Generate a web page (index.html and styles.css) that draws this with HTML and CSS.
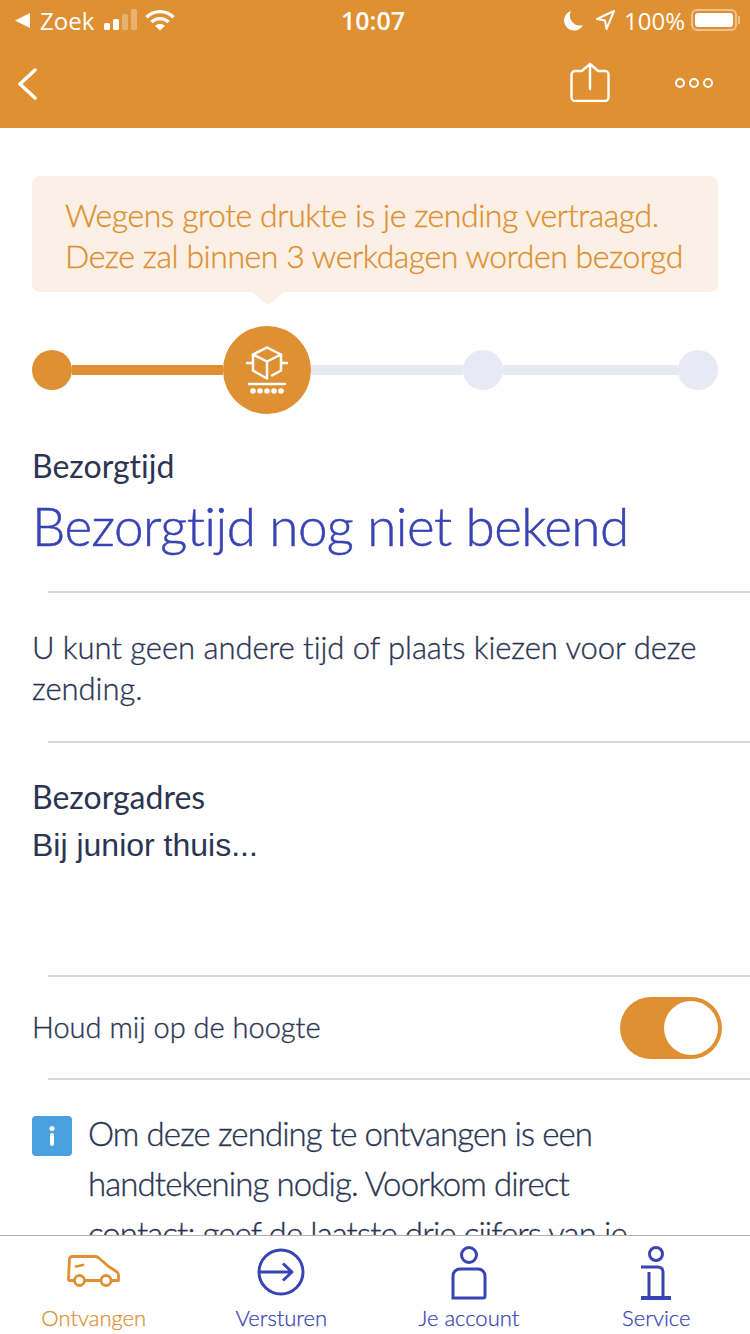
FILE: index.html
```html
<!DOCTYPE html>
<html lang="nl">

<head>
    <meta charset="UTF-8">
    <meta name="viewport" content="width=device-width, initial-scale=1.0">
    <title>Zending</title>
    <link rel="stylesheet" href="styles.css">
</head>

<body>
    <div class="page">
        <header class="top">
            <div class="status">
                <div class="status-left">
                    <svg class="ic-back-small" width="16" height="15" viewBox="0 0 16 15"><path d="M15 0v15L0 7.500z" fill="#fff"/></svg>
                    <span class="carrier">Zoek</span>
                    <svg class="ic-signal" width="34" height="22" viewBox="0 0 34 22">
                        <rect x="0" y="14" width="6" height="7" rx="1.500" fill="#fff"/>
                        <rect x="9" y="10" width="6" height="11" rx="1.500" fill="#fff"/>
                        <rect x="18" y="5" width="6" height="16" rx="1.500" fill="#fff" opacity=".3"/>
                        <rect x="27" y="0" width="6" height="21" rx="1.500" fill="#fff" opacity=".3"/>
                    </svg>
                    <svg class="ic-wifi" width="30" height="22" viewBox="0 0 30 22" fill="none" stroke="#fff" stroke-width="3.400">
                        <path d="M1.500 8.200C9 .8 21 .8 28.500 8.200"/>
                        <path d="M6.500 13C11.500 8.500 18.500 8.500 23.500 13"/>
                        <path d="M15 21.500l-5-4.800c3-2.400 7-2.400 10 0z" fill="#fff" stroke="none"/>
                    </svg>
                </div>
                <span class="clock">10:07</span>
                <div class="status-right">
                    <svg width="20" height="21" viewBox="0 0 20 21"><path d="M7 1a10 10 0 0 0 12 14A10 10 0 1 1 7 1z" fill="#fff"/></svg>
                    <svg class="ic-location" width="19" height="20" viewBox="0 0 19 20" fill="none" stroke="#fff" stroke-width="2" stroke-linejoin="round"><path d="M18 1L1 9l8 1.500L10.500 19z"/></svg>
                    <span class="battery-text">100%</span>
                    <div class="battery"><div class="battery-fill"></div></div>
                    <div class="battery-tip"></div>
                </div>
            </div>
            <nav class="navbar">
                <svg class="nav-back" width="20" height="32" viewBox="0 0 20 32" fill="none" stroke="#fff" stroke-width="3.400" stroke-linecap="round" stroke-linejoin="round"><path d="M18 2L3 16l15 14"/></svg>
                <div class="nav-actions">
                    <svg class="ic-share" width="40" height="40" viewBox="0 0 40 40" fill="none" stroke="#fff" stroke-width="2.400" stroke-linecap="round" stroke-linejoin="round">
                        <path d="M12 9H5a3.500 3.500 0 0 0-3.500 3.500v23A3.500 3.500 0 0 0 5 39h30a3.500 3.500 0 0 0 3.500-3.500v-23A3.500 3.500 0 0 0 35 9h-7"/>
                        <path d="M20 27V2M13 8l7-6 7 6"/>
                    </svg>
                    <svg class="ic-more" width="38" height="10" viewBox="0 0 38 10" fill="none" stroke="#fff" stroke-width="2"><circle cx="5" cy="5" r="4"/><circle cx="19" cy="5" r="4"/><circle cx="33" cy="5" r="4"/></svg>
                </div>
            </nav>
        </header>

        <main class="content">
            <div class="notice">
                <p>Wegens grote drukte is je zending vertraagd.<br>Deze zal binnen 3 werkdagen worden bezorgd</p>
            </div>

            <div class="stepper">
                <span class="dot dot-done"></span>
                <span class="line line-done line-a"></span>
                <span class="step-current">
                    <svg width="44" height="48" viewBox="0 0 44 48" fill="none" stroke="#fff" stroke-width="2.500" stroke-linecap="round" stroke-linejoin="round">
                        <path d="M22 1.500l14 7v16M22 1.500l-14 7v16l12 7M8 8.500l14 7 14-7M22 15.500v17M36 24.500l-9 5"/>
                        <path d="M2 17h5M37 17h5"/>
                        <path d="M4 38h36"/>
                        <g fill="#fff" stroke="none"><circle cx="8" cy="45" r="2.800"/><circle cx="15" cy="45" r="2.800"/><circle cx="22" cy="45" r="2.800"/><circle cx="29" cy="45" r="2.800"/><circle cx="36" cy="45" r="2.800"/></g>
                    </svg>
                </span>
                <span class="line line-b"></span>
                <span class="dot"></span>
                <span class="line line-c"></span>
                <span class="dot"></span>
            </div>

            <section class="block block-time">
                <h2 class="label">Bezorgtijd</h2>
                <h1 class="headline">Bezorgtijd nog niet bekend</h1>
            </section>

            <section class="block block-note">
                <p class="body-text">U kunt geen andere tijd of plaats kiezen voor deze zending.</p>
            </section>

            <section class="block block-address">
                <h2 class="label">Bezorgadres</h2>
                <p class="address">Bij junior thuis...</p>
            </section>

            <section class="block block-toggle">
                <span class="toggle-text">Houd mij op de hoogte</span>
                <span class="toggle"><span class="knob"></span></span>
            </section>

            <section class="info">
                <span class="info-badge">
                    <svg width="6" height="20" viewBox="0 0 6 20" fill="#fff"><circle cx="3" cy="2.500" r="2.500"/><rect x="1" y="7" width="4" height="13" rx="2"/></svg>
                </span>
                <p>Om deze zending te ontvangen is een handtekening nodig. Voorkom direct contact: geef de laatste drie cijfers van je</p>
            </section>
        </main>

        <footer class="tabs">
            <a class="tab tab-active">
                <svg width="54" height="33" viewBox="0 0 54 33" fill="none" stroke="#de9033" stroke-width="2.800" stroke-linecap="round" stroke-linejoin="round">
                    <path d="M7 25.500H3c-1 0-1.500-.5-1.500-1.500L2.500 4c0-2 1-2.500 3-2.500H28c2 0 3 .5 4.500 2L41 11l9 6c1 .8 1.500 1.500 1.500 3v5.500H45"/>
                    <circle cx="12.500" cy="25.500" r="5"/><circle cx="39" cy="25.500" r="5"/><path d="M18 25.500h15.500"/>
                    <path d="M9 11.500l7-1.500"/>
                </svg>
                <span>Ontvangen</span>
            </a>
            <a class="tab">
                <svg class="ic-send" width="48" height="48" viewBox="0 0 48 48" fill="none" stroke="#3843b4" stroke-width="3"><circle cx="24" cy="24" r="22"/><path d="M2 24h33M26 15.500l9 8.500-9 8.500" stroke-linejoin="round"/></svg>
                <span>Versturen</span>
            </a>
            <a class="tab">
                <svg width="36" height="54" viewBox="0 0 36 54" fill="none" stroke="#3843b4" stroke-width="3"><circle cx="18" cy="9" r="7.500"/><path d="M2 52V30c0-4 3-7 7-7h18c4 0 7 3 7 7v20c0 1-.5 2-2 2z"/></svg>
                <span>Je account</span>
            </a>
            <a class="tab">
                <svg width="32" height="54" viewBox="0 0 32 54" fill="none" stroke="#3843b4" stroke-width="3"><circle cx="16" cy="8" r="6.500"/><path d="M1 21h17c3 0 5 2 5 5v25M9 26v25"/><path d="M1 52h30" stroke-width="4"/></svg>
                <span>Service</span>
            </a>
        </footer>
    </div>
</body>

</html>
```

FILE: styles.css
```css
* {
    box-sizing: border-box;
    padding: 0;
    margin: 0;
}

body {
    background-color: #fff;
    font-family: Lato, sans-serif;
    font-variant-ligatures: none;
    color: #2b3553;
}

.page {
    width: 750px;
    height: 1334px;
    display: flex;
    flex-direction: column;
    overflow: hidden;
}

.top {
    height: 128px;
    background-color: #de9033;
    color: #fff;
    flex-shrink: 0;
}

.status {
    height: 40px;
    padding: 0 10px 0 15px;
    display: flex;
    align-items: center;
    justify-content: space-between;
    position: relative;
    font-family: "Open Sans", sans-serif;
    font-size: 24px;
}

.status-left,
.status-right {
    display: flex;
    align-items: center;
}

.carrier {
    margin-left: 9px;
    margin-right: 10px;
}

.ic-wifi {
    margin-left: 7px;
}

.clock {
    position: absolute;
    left: 0;
    right: 4px;
    text-align: center;
    font-size: 25px;
    font-weight: 600;
}

.ic-location {
    margin-left: 12px;
}

.battery-text {
    margin-left: 9px;
    margin-right: 6px;
}

.battery {
    width: 46px;
    height: 22px;
    border: 2px solid rgba(255, 255, 255, 0.45);
    border-radius: 6px;
    padding: 2px;
}

.battery-fill {
    height: 100%;
    background-color: #fff;
    border-radius: 3px;
}

.battery-tip {
    width: 2px;
    height: 8px;
    margin-left: 1px;
    background-color: rgba(255, 255, 255, 0.45);
}

.navbar {
    height: 88px;
    padding: 0 37px 4px 17px;
    display: flex;
    align-items: center;
    justify-content: space-between;
}

.nav-back {
    margin-top: 4px;
}

.nav-actions {
    display: flex;
    align-items: center;
    gap: 65px;
}

.ic-more {
    margin-top: 2px;
}

.content {
    flex: 1;
    min-height: 0;
    overflow: hidden;
    padding-top: 48px;
}

.notice {
    position: relative;
    margin: 0 32px;
    height: 116px;
    padding: 18px 33px 0;
    background-color: #faf0e5;
    border-radius: 8px;
    color: #de9033;
    font-size: 32px;
    font-weight: 300;
    letter-spacing: -0.45px;
    -webkit-text-stroke: 0.35px #de9033;
    line-height: 41px;
    white-space: nowrap;
}

.notice::after {
    content: "";
    position: absolute;
    left: 220px;
    bottom: -13px;
    border-left: 16px solid transparent;
    border-right: 16px solid transparent;
    border-top: 13px solid #faf0e5;
}

.stepper {
    margin: 34px 32px 0;
    height: 88px;
    display: flex;
    align-items: center;
}

.dot {
    width: 40px;
    height: 40px;
    border-radius: 50%;
    background-color: #e9e9f6;
    flex-shrink: 0;
}

.dot-done {
    background-color: #de9033;
}

.line {
    height: 10px;
    background-color: #e9e9f6;
}

.line-done {
    background-color: #de9033;
}

.line-a {
    width: 151px;
}

.line-b {
    width: 152px;
}

.line-c {
    width: 175px;
}

.step-current {
    width: 88px;
    height: 88px;
    border-radius: 50%;
    background-color: #de9033;
    display: flex;
    align-items: center;
    justify-content: center;
    flex-shrink: 0;
}

.block {
    position: relative;
    padding: 0 32px;
}

.block::after {
    content: "";
    position: absolute;
    left: 48px;
    right: 0;
    bottom: 0;
    height: 2px;
    background-color: #d3d6e3;
}

.block-time {
    height: 179px;
    padding-top: 33px;
}

.label {
    font-size: 32px;
    line-height: 38px;
    font-weight: 400;
}

.headline {
    margin-top: 7px;
    font-size: 53px;
    line-height: 68px;
    font-weight: 300;
    letter-spacing: -0.55px;
    -webkit-text-stroke: 0.5px #3843b4;
    color: #3843b4;
}

.body-text {
    font-size: 31px;
    font-weight: 300;
    letter-spacing: -0.05px;
    -webkit-text-stroke: 0.35px #2b3553;
    line-height: 41px;
}

.toggle-text {
    padding-bottom: 2px;
    font-size: 29px;
    font-weight: 300;
    -webkit-text-stroke: 0.35px #2b3553;
    line-height: 41px;
}

.block-note {
    height: 150px;
    padding-top: 34px;
}

.block-address {
    height: 234px;
    padding-top: 35px;
}

.address {
    margin-top: 9px;
    font-family: "Liberation Sans", sans-serif;
    font-size: 32px;
    line-height: 40px;
}

.block-toggle {
    height: 103px;
    display: flex;
    align-items: center;
    justify-content: space-between;
    padding-right: 28px;
    padding-bottom: 2px;
}

.toggle {
    width: 102px;
    height: 62px;
    border-radius: 31px;
    background-color: #de9033;
    padding: 4px;
    display: flex;
    justify-content: flex-end;
}

.knob {
    width: 54px;
    height: 54px;
    border-radius: 50%;
    background-color: #fff;
}

.info {
    padding: 28px 32px 0;
    display: flex;
    gap: 16px;
    font-size: 33px;
    font-weight: 300;
    letter-spacing: -0.9px;
    -webkit-text-stroke: 0.35px #2b3553;
    line-height: 50px;
}

.info-badge {
    width: 40px;
    height: 40px;
    margin-top: 8px;
    border-radius: 4px;
    background-color: #4a9fdf;
    display: flex;
    align-items: center;
    justify-content: center;
    flex-shrink: 0;
}

.info p {
    width: 560px;
}

.tabs {
    height: 99px;
    flex-shrink: 0;
    background-color: #fff;
    border-top: 1px solid #b0b0b0;
    display: grid;
    grid-template-columns: repeat(4, 1fr);
}

.tab {
    position: relative;
    display: flex;
    flex-direction: column;
    align-items: center;
    justify-content: flex-end;
    font-size: 22px;
    font-weight: 300;
    -webkit-text-stroke: 0.25px currentColor;
    line-height: 30px;
    color: #3843b4;
    padding-bottom: 1px;
}

.tab svg {
    position: absolute;
    top: 10px;
}

.tab .ic-send {
    top: 12px;
}

.tab-active {
    color: #de9033;
}

.tab-active svg {
    top: 19px;
}
```
